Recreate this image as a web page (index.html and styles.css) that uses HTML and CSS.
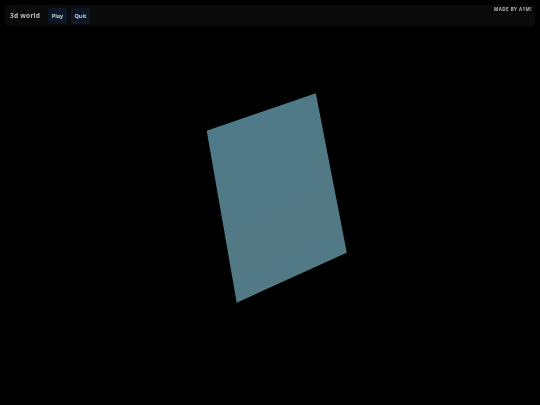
FILE: index.html
```html
<!DOCTYPE html>
<html lang="en">
<head>
    <meta charset="UTF-8">
    <title>3d world</title>
    <link rel="stylesheet" href="styles.css">
</head>
<body>
    <div class="topbar">
        <span class="title">3d world</span>
        <button class="btn">Play</button>
        <button class="btn">Quit</button>
    </div>
    <div class="credit">MADE BY A1M!</div>

    <svg class="scene" viewBox="0 0 540 405">
        <defs>
            <linearGradient id="planeFill" x1="0.3" y1="0" x2="0.6" y2="1">
                <stop offset="0" stop-color="#4e7a89"/>
                <stop offset="0.7" stop-color="#537984"/>
                <stop offset="1" stop-color="#507a87"/>
            </linearGradient>
        </defs>
        <polygon fill="url(#planeFill)" points="206.7,130.7 315.8,93.3 346.8,252.7 236.7,302.7"/>
    </svg>
</body>
</html>
```

FILE: styles.css
```css
html, body {
    margin: 0;
    height: 100%;
}

body {
    background: #000;
    font-family: "Noto Sans", "Liberation Sans", sans-serif;
    overflow: hidden;
}

.scene {
    display: block;
    width: 540px;
    height: 405px;
}

.topbar {
    position: absolute;
    top: 5px;
    left: 5px;
    right: 5px;
    height: 21px;
    box-sizing: border-box;
    padding: 0 5px;
    display: flex;
    align-items: center;
    gap: 4px;
    background: rgba(255, 255, 255, 0.04);
    backdrop-filter: blur(4px);
    border-radius: 4px;
}

.title {
    width: 30px;
    white-space: nowrap;
    font-size: 6.5px;
    font-weight: 700;
    letter-spacing: 0.25px;
    color: #b4c1c8;
    margin-right: 4px;
}

.btn {
    width: 19px;
    height: 16px;
    padding: 0;
    border: none;
    border-radius: 2px;
    background: #0c1725;
    color: #c3d0d8;
    font-family: inherit;
    font-size: 5.5px;
    font-weight: 700;
}

.credit {
    position: absolute;
    top: 6px;
    right: 8px;
    font-size: 4.5px;
    font-weight: 700;
    letter-spacing: 0.45px;
    color: #b4bcc1;
    backdrop-filter: blur(1px);
}
```
